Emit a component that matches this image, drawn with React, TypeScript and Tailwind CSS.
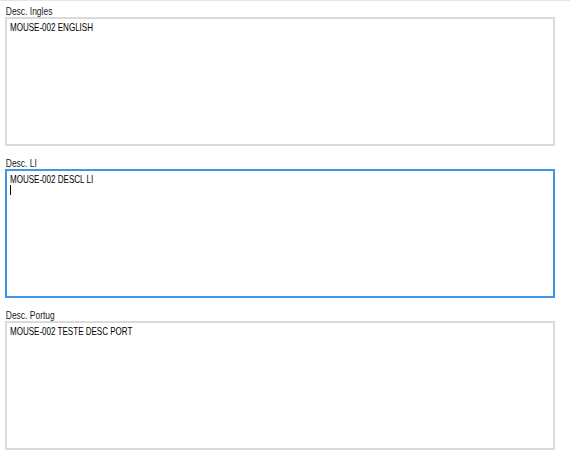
import React from 'react';

type Field = { label: string; value: string; focused?: boolean };

const fields: Field[] = [
  { label: 'Desc. Ingles', value: 'MOUSE-002 ENGLISH' },
  { label: 'Desc. LI', value: 'MOUSE-002 DESCL LI', focused: true },
  { label: 'Desc. Portug', value: 'MOUSE-002 TESTE DESC PORT' },
];

function MemoField({ label, value, focused }: Field) {
  return (
    <div className="mt-[11px] first:mt-[4px]">
      {/* labels and memo text run condensed, like the old form font */}
      <div className="h-[12px] origin-left scale-x-[0.77] whitespace-nowrap pl-px text-[11px] leading-[12px] text-[#1a1a1a]">
        {label}
      </div>
      <div
        className={
          'h-[129px] w-[550px] bg-white px-[3px] pt-[2px] text-[11px] leading-[12px] text-black ' +
          (focused ? 'border-2 border-[#3a97ea]' : 'border-2 border-[#dadada]')
        }
      >
        <div className="origin-left scale-x-[0.73] whitespace-nowrap">{value}</div>
        {focused && <div className="h-[10px] w-px bg-black" />}
      </div>
    </div>
  );
}

export default function App() {
  return (
    <div className="h-[464px] w-[570px] bg-white font-['Liberation_Sans',Arial,sans-serif]">
      <div className="border-t border-[#e6e6e6]" />
      <div className="px-[5px]">
        {fields.map((f) => (
          <MemoField key={f.label} {...f} />
        ))}
      </div>
    </div>
  );
}
